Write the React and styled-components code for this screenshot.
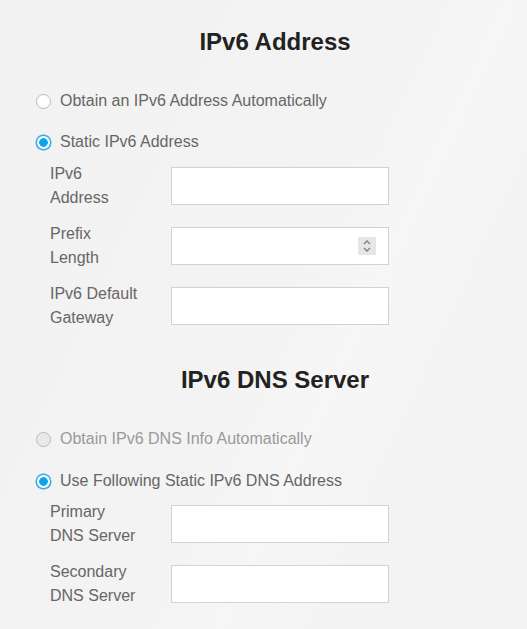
import styled, { createGlobalStyle } from "styled-components";

const GlobalStyle = createGlobalStyle`
  html, body {
    margin: 0;
    padding: 0;
  }
  body {
    font-family: "Liberation Sans", Arial, sans-serif;
    background: linear-gradient(115deg, #f2f2f2 0%, #f3f3f3 50%, #f6f6f6 62%, #f3f3f3 80%);
    min-height: 629px;
  }
`;

const Page = styled.div`
  width: 527px;
  min-height: 629px;
  padding-top: 28px;
  box-sizing: border-box;
`;

const Section = styled.section`
  display: flex;
  flex-direction: column;
  margin-bottom: ${(p) => p.$gapAfter || 0}px;
`;

const Title = styled.h2`
  margin: 0 0 33px;
  padding-left: 23px;
  text-align: center;
  font-size: 24px;
  line-height: 28px;
  font-weight: bold;
  color: #222;
`;

const RadioGroup = styled.div`
  display: flex;
  flex-direction: column;
  gap: ${(p) => p.$gap || 17}px;
  padding-left: 36px;
`;

const RadioRow = styled.label`
  display: flex;
  align-items: center;
  gap: 9px;
  height: 24px;
  font-size: 16px;
  color: ${(p) => (p.$disabled ? "#9a9a9a" : "#666")};
`;

const Circle = styled.span`
  box-sizing: border-box;
  width: 15px;
  height: 15px;
  border-radius: 50%;
  flex-shrink: 0;
  border: 1px solid ${(p) => (p.$checked ? "#0a9de6" : "#b9b9b9")};
  background: ${(p) =>
    p.$checked
      ? "radial-gradient(circle, #0aa3ee 0 4px, #fff 4.6px)"
      : p.$disabled
      ? "#e9e9e9"
      : "#fff"};
  box-shadow: ${(p) => (p.$checked ? "0 0 0 0.5px #0a9de6" : "none")};
`;

const Fields = styled.div`
  display: flex;
  flex-direction: column;
  gap: 12px;
  padding-left: 50px;
  margin-top: ${(p) => p.$top || 8}px;
`;

const FieldRow = styled.div`
  display: flex;
  align-items: center;
  height: 48px;
`;

const FieldLabel = styled.div`
  width: 121px;
  font-size: 16px;
  line-height: 24px;
  color: #666;

  span {
    display: block;
  }
`;

const InputBox = styled.div`
  position: relative;
  width: 218px;
  height: 38px;
  box-sizing: border-box;
  border: 1px solid #d2d2d2;
  background: #fff;
`;

const Input = styled.input`
  width: 100%;
  height: 100%;
  box-sizing: border-box;
  border: none;
  outline: none;
  background: transparent;
  padding: 0 10px;
  font: 16px "Liberation Sans", Arial, sans-serif;
`;

const Spinner = styled.span`
  position: absolute;
  right: 12px;
  top: 9px;
  width: 18px;
  height: 18px;
  background: #e6e6e6;
  display: flex;
  align-items: center;
  justify-content: center;
`;

const Radio = ({ label, checked, disabled }) => (
  <RadioRow $disabled={disabled}>
    <Circle $checked={checked} $disabled={disabled} />
    {label}
  </RadioRow>
);

const Field = ({ lines, spin }) => (
  <FieldRow>
    <FieldLabel>
      {lines.map((l) => (
        <span key={l}>{l}</span>
      ))}
    </FieldLabel>
    <InputBox>
      <Input type="text" />
      {spin && (
        <Spinner>
          <svg width="10" height="14" viewBox="0 0 10 14" fill="none" stroke="#808080" strokeWidth="1.3">
            <path d="M2 5 L5 2 L8 5" />
            <path d="M2 9 L5 12 L8 9" />
          </svg>
        </Spinner>
      )}
    </InputBox>
  </FieldRow>
);

export default function App() {
  return (
    <>
      <GlobalStyle />
      <Page>
        <Section $gapAfter={36}>
          <Title>IPv6 Address</Title>
          <RadioGroup>
            <Radio label="Obtain an IPv6 Address Automatically" />
            <Radio label="Static IPv6 Address" checked />
          </RadioGroup>
          <Fields $top={8}>
            <Field lines={["IPv6", "Address"]} />
            <Field lines={["Prefix", "Length"]} spin />
            <Field lines={["IPv6 Default", "Gateway"]} />
          </Fields>
        </Section>
        <Section>
          <Title>IPv6 DNS Server</Title>
          <RadioGroup $gap={18}>
            <Radio label="Obtain IPv6 DNS Info Automatically" disabled />
            <Radio label="Use Following Static IPv6 DNS Address" checked />
          </RadioGroup>
          <Fields $top={7}>
            <Field lines={["Primary", "DNS Server"]} />
            <Field lines={["Secondary", "DNS Server"]} />
          </Fields>
        </Section>
      </Page>
    </>
  );
}
